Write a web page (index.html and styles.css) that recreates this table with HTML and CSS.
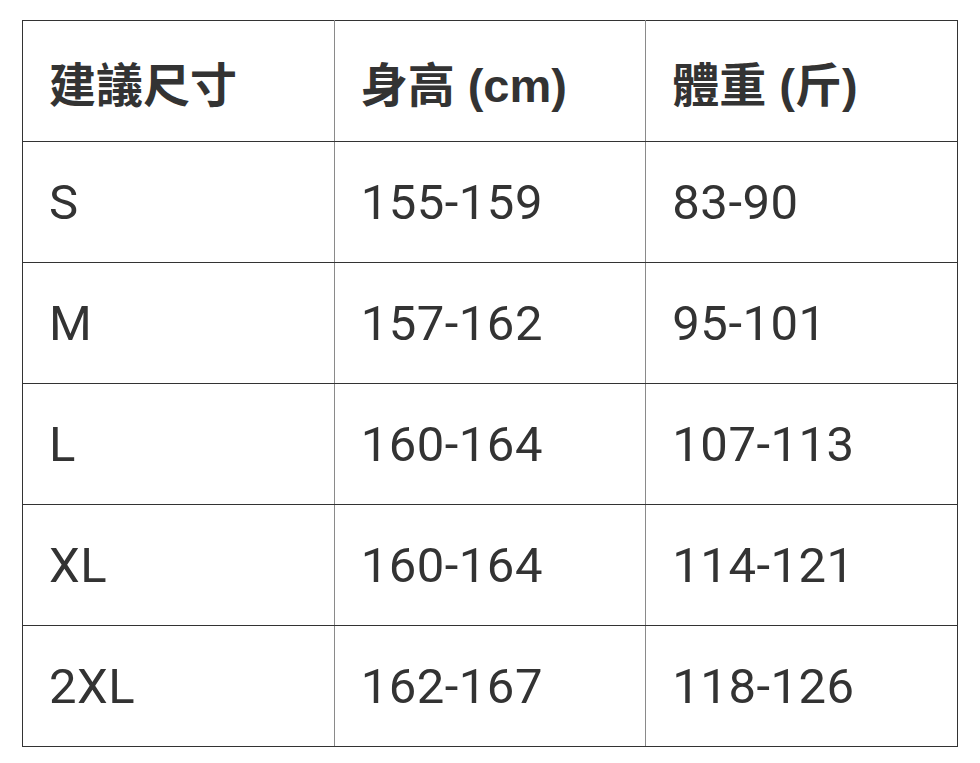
FILE: index.html
```html
<!DOCTYPE html>
<html lang="zh-Hant">
<head>
<meta charset="utf-8">
<link rel="stylesheet" href="styles.css">
</head>
<body>
<table class="size-table">
  <thead>
    <tr><th>建議尺寸</th><th>身高 (cm)</th><th>體重 (斤)</th></tr>
  </thead>
  <tbody>
    <tr><td>S</td><td>155-159</td><td>83-90</td></tr>
    <tr><td>M</td><td>157-162</td><td>95-101</td></tr>
    <tr><td>L</td><td>160-164</td><td>107-113</td></tr>
    <tr><td>XL</td><td>160-164</td><td>114-121</td></tr>
    <tr><td>2XL</td><td>162-167</td><td>118-126</td></tr>
  </tbody>
</table>
</body>
</html>
```

FILE: styles.css
```css
html, body {
  margin: 0;
  padding: 0;
  background: #ffffff;
}
body {
  padding: 20px 0 0 22px;
  font-family: Roboto, "Noto Sans CJK TC", sans-serif;
  color: #333333;
}
.size-table {
  border-collapse: collapse;
  width: 936px;
  table-layout: fixed;
  border: 1px solid #333333;
}
.size-table th,
.size-table td {
  height: 121px;
  box-sizing: border-box;
  padding: 0 0 0 26px;
  text-align: left;
  vertical-align: middle;
  border-top: 1px solid #333333;
  border-bottom: 1px solid #333333;
  border-left: 1px solid #8a8a8a;
  border-right: 1px solid #8a8a8a;
  font-size: 49px;
  letter-spacing: 0.5px;
}
.size-table th:first-child,
.size-table td:first-child {
  border-left: 1px solid #333333;
}
.size-table th:last-child,
.size-table td:last-child {
  border-right: 1px solid #333333;
}
.size-table th {
  font-family: "Liberation Sans", "Noto Sans CJK TC", sans-serif;
  font-weight: 700;
  font-size: 47px;
  letter-spacing: 0;
}
.size-table td {
  font-weight: 400;
}
```
